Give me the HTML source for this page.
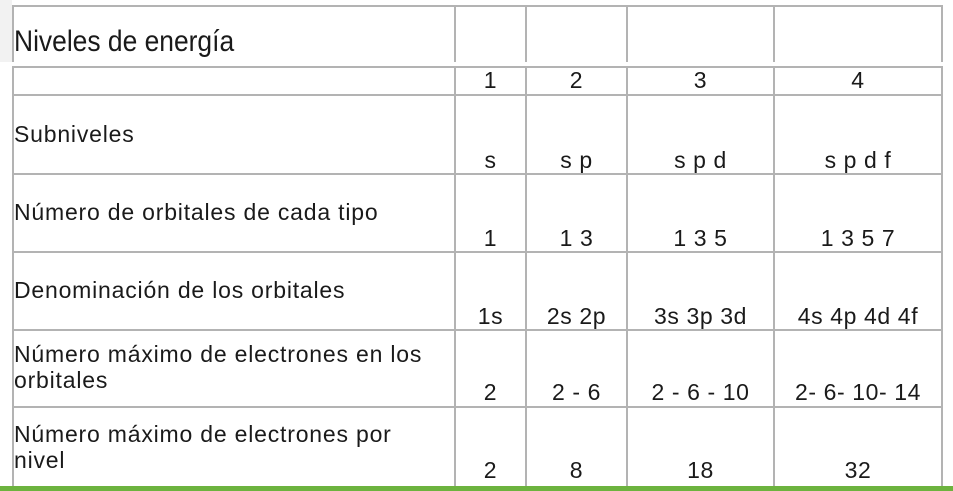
<!DOCTYPE html>
<html><head><meta charset="utf-8"><style>
body{margin:0;width:953px;height:491px;background:#fff;position:relative;overflow:hidden;font-family:"Liberation Sans",sans-serif;color:#1a1a1a}
.h{position:absolute;background:#b3b3b3;height:2px}
.v{position:absolute;background:#b3b3b3;width:2px}
.t{position:absolute;font-size:23px;line-height:26px;white-space:nowrap;letter-spacing:0.8px}
.c{text-align:center;letter-spacing:0.6px}
</style></head><body>
<div style="position:absolute;left:0;top:0;width:12px;height:62px;background:#f2f2f2"></div>
<div class="h" style="left:12px;top:5px;width:931px"></div>
<div class="v" style="left:12px;top:5px;height:57px"></div>
<div class="v" style="left:454px;top:5px;height:57px"></div>
<div class="v" style="left:525px;top:5px;height:57px"></div>
<div class="v" style="left:626px;top:5px;height:57px"></div>
<div class="v" style="left:773px;top:5px;height:57px"></div>
<div class="v" style="left:941px;top:5px;height:57px"></div>
<div class="t" style="left:14px;top:26px;font-size:30px;line-height:32px;letter-spacing:0;transform:scaleX(0.88);transform-origin:left">Niveles de energía</div>
<div class="h" style="left:12px;top:66px;width:931px"></div>
<div class="h" style="left:12px;top:94px;width:931px"></div>
<div class="h" style="left:12px;top:173px;width:931px"></div>
<div class="h" style="left:12px;top:251px;width:931px"></div>
<div class="h" style="left:12px;top:329px;width:931px"></div>
<div class="h" style="left:12px;top:406px;width:931px"></div>
<div class="v" style="left:12px;top:66px;height:420px"></div>
<div class="v" style="left:454px;top:66px;height:420px"></div>
<div class="v" style="left:525px;top:66px;height:420px"></div>
<div class="v" style="left:626px;top:66px;height:420px"></div>
<div class="v" style="left:773px;top:66px;height:420px"></div>
<div class="v" style="left:941px;top:66px;height:420px"></div>
<div style="position:absolute;left:0;top:486px;width:953px;height:5px;background:#6cb33e"></div>

<div class="t c" style="left:455px;width:71px;top:67px">1</div>
<div class="t c" style="left:526px;width:101px;top:67px">2</div>
<div class="t c" style="left:627px;width:147px;top:67px">3</div>
<div class="t c" style="left:774px;width:168px;top:67px">4</div>

<div class="t" style="left:14px;top:121px">Subniveles</div>
<div class="t c" style="left:455px;width:71px;top:147px">s</div>
<div class="t c" style="left:526px;width:101px;top:147px">s p</div>
<div class="t c" style="left:627px;width:147px;top:147px">s p d</div>
<div class="t c" style="left:774px;width:168px;top:147px">s p d f</div>

<div class="t" style="left:14px;top:199px">Número de orbitales de cada tipo</div>
<div class="t c" style="left:455px;width:71px;top:225px">1</div>
<div class="t c" style="left:526px;width:101px;top:225px">1 3</div>
<div class="t c" style="left:627px;width:147px;top:225px">1 3 5</div>
<div class="t c" style="left:774px;width:168px;top:225px">1 3 5 7</div>

<div class="t" style="left:14px;top:277px">Denominación de los orbitales</div>
<div class="t c" style="left:455px;width:71px;top:303px">1s</div>
<div class="t c" style="left:526px;width:101px;top:303px">2s 2p</div>
<div class="t c" style="left:627px;width:147px;top:303px">3s 3p 3d</div>
<div class="t c" style="left:774px;width:168px;top:303px">4s 4p 4d 4f</div>

<div class="t" style="left:14px;top:341px">Número máximo de electrones en los</div>
<div class="t" style="left:14px;top:367px">orbitales</div>
<div class="t c" style="left:455px;width:71px;top:379px">2</div>
<div class="t c" style="left:526px;width:101px;top:379px">2 - 6</div>
<div class="t c" style="left:627px;width:147px;top:379px">2 - 6 - 10</div>
<div class="t c" style="left:774px;width:168px;top:379px">2- 6- 10- 14</div>

<div class="t" style="left:14px;top:421px">Número máximo de electrones por</div>
<div class="t" style="left:14px;top:447px">nivel</div>
<div class="t c" style="left:455px;width:71px;top:457px">2</div>
<div class="t c" style="left:526px;width:101px;top:457px">8</div>
<div class="t c" style="left:627px;width:147px;top:457px">18</div>
<div class="t c" style="left:774px;width:168px;top:457px">32</div>
</body></html>
